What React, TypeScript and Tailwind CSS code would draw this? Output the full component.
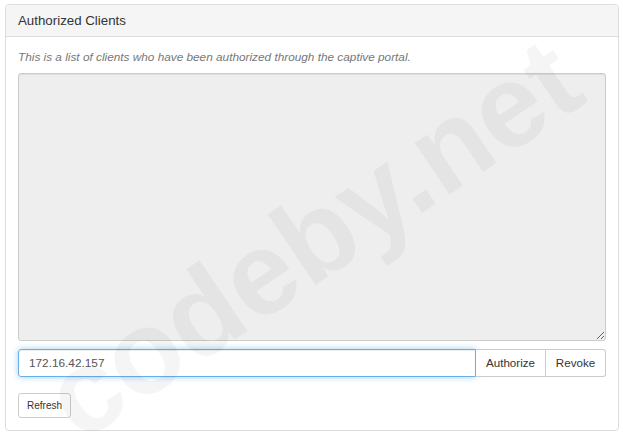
import React from 'react';

const App = () => {
  return (
    <div className="relative w-[623px] h-[435px] bg-white overflow-hidden" style={{ fontFamily: '"Liberation Sans", Arial, sans-serif' }}>
      <div className="pt-[4px] pl-[5px] pr-[4px]">
        <div className="border border-[#dddddd] rounded-[4px] bg-white">
          {/* Heading */}
          <div className="h-[32px] bg-[#f5f5f5] border-b border-[#dddddd] rounded-t-[4px] flex items-center px-[12px]">
            <h3 className="text-[13.3px] text-[#333333]">Authorized Clients</h3>
          </div>

          {/* Body */}
          <div className="px-[12px] pt-[12px] pb-[12px]">
            <p className="text-[11.8px] italic text-[#777777] leading-[16px]">
              This is a list of clients who have been authorized through the captive portal.
            </p>

            <textarea
              readOnly
              className="mt-[8px] block w-full h-[268px] bg-[#eeeeee] border border-[#cccccc] rounded-[3px] shadow-[inset_0_1px_1px_rgba(0,0,0,0.075)] resize-y outline-none"
            />

            <div className="mt-[8px] flex h-[28px]">
              <input
                defaultValue="172.16.42.157"
                className="flex-1 min-w-0 h-full px-[10px] text-[11.8px] text-[#555555] border border-[#66afe9] rounded-l-[3px] shadow-[inset_0_1px_1px_rgba(0,0,0,0.075),0_0_6px_rgba(102,175,233,0.6)] outline-none"
              />
              <button className="h-full w-[70px] border border-[#cccccc] border-l-0 bg-white text-[11.6px] text-[#333333]">
                Authorize
              </button>
              <button className="h-full w-[60px] border border-[#cccccc] border-l-0 bg-white rounded-r-[3px] text-[11.6px] text-[#333333]">
                Revoke
              </button>
            </div>

            <button className="mt-[16px] h-[25px] px-[8px] border border-[#cccccc] rounded-[3px] bg-white text-[10px] text-[#333333]">
              Refresh
            </button>
          </div>
        </div>
      </div>

      {/* Watermark */}
      <div className="pointer-events-none absolute left-[312px] top-[238px] -translate-x-1/2 -translate-y-1/2 -rotate-[34deg] whitespace-nowrap text-[118px] font-bold text-black/[0.04] leading-none">
        codeby.net
      </div>
    </div>
  );
};

export default App;
